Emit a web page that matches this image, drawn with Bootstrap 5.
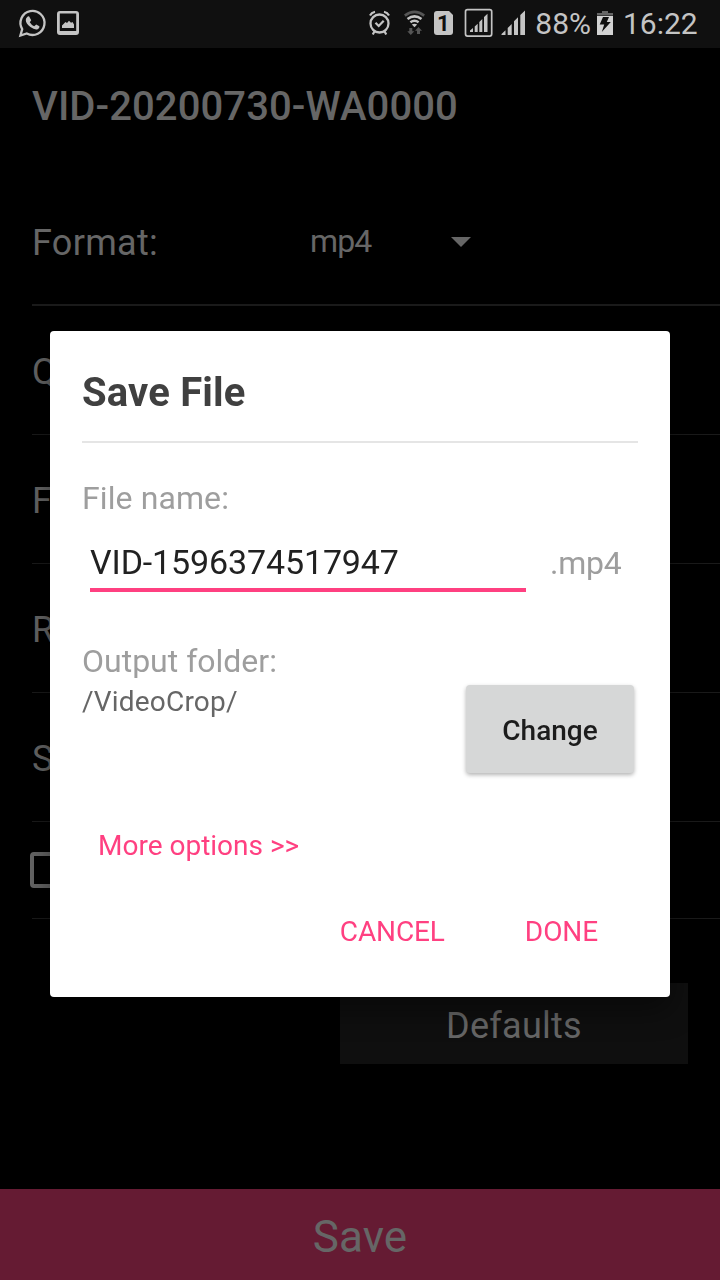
<!DOCTYPE html>
<html lang="en">
<head>
<meta charset="utf-8">
<meta name="viewport" content="width=device-width, initial-scale=1">
<title>Save File</title>
<link href="https://cdn.jsdelivr.net/npm/bootstrap@5.3.0/dist/css/bootstrap.min.css" rel="stylesheet">
<style>
  :root { --pink: #ff4081; --dim: #666; --rule: #1a1a1a; }
  body { font-family: Roboto, sans-serif; background: #000; color: var(--dim); height: 1280px; overflow: hidden; line-height: 1.2; }
  .status-bar { height: 48px; background: #101010; color: #c4c4c4; font-size: 30px; line-height: 47px; }
  .status-bar svg { height: 48px; display: block; flex: none; }
  .page-title { height: 117px; margin-bottom: 13px; font-size: 40px; font-weight: 500; letter-spacing: .09px; padding-left: 32px; }
  .setting { height: 129px; margin-left: 32px; padding-top: 6px; font-size: 36px; border-bottom: 1px solid var(--rule); }
  .setting-first { height: 128px; border-bottom-width: 2px; padding-top: 5px; }
  .setting-label { width: 278px; letter-spacing: .3px; }
  .setting-value { font-size: 32px; width: 141px; letter-spacing: -.9px; margin-bottom: 5px; }
  .setting-check { height: 97px; padding: 0; }
  .tick-box { width: 36px; height: 36px; border: 4px solid var(--dim); border-radius: 4px; margin-left: -2px; }
  .defaults-btn { width: 348px; height: 81px; margin: 64px 32px 0 auto; background: #0f0f0f; font-size: 36px; padding-top: 7px; letter-spacing: .25px; }
  .save-btn { height: 91px; background: #651b33; font-size: 44px; padding-top: 6px; letter-spacing: .1px; }
  .overlay { top: 48px; }
  .dialog { width: 620px; height: 666px; border-radius: 4px; padding: 0 32px; background: #fff; box-shadow: 0 12px 30px rgba(0,0,0,.45); }
  .dialog-title { height: 112px; padding-top: 13px; font-size: 40px; font-weight: 700; letter-spacing: .18px; color: #404040; border-bottom: 2px solid #e5e5e5; }
  .field-label { font-size: 32px; line-height: 40px; color: #9e9e9e; }
  .name-label { margin-top: 35px; letter-spacing: .1px; }
  .file-row { margin: 18px 0 0 8px; }
  .file-input { width: 436px; height: 56px; font-size: 34px; line-height: 40px; padding: 6px 0 0; letter-spacing: -.13px; color: #212121; border-bottom: 4px solid var(--pink); }
  .file-ext { font-size: 32px; line-height: 40px; padding: 7px 0 0 24px; letter-spacing: -.2px; color: #9e9e9e; }
  .folder { margin-top: 49px; }
  .folder-path { font-size: 28px; line-height: 40px; padding-top: 1px; letter-spacing: .2px; color: #666; }
  .change-btn { width: 168px; height: 88px; margin: 44px 4px 0 0; border-radius: 4px; background: #d6d7d7; color: #1c1c1c; font-size: 28px; font-weight: 500; padding-top: 3px; box-shadow: 0 2px 4px rgba(0,0,0,.3); }
  .link-text { font-size: 28px; line-height: 40px; color: var(--pink); }
  .more { margin: 53px 0 0 16px; }
  .actions { margin-top: 46px; padding-right: 40px; gap: 80px; letter-spacing: -.1px; }
</style>
</head>
<body class="d-flex flex-column">
  <header class="status-bar d-flex flex-shrink-0">
    <svg style="width:82px" viewBox="0 0 82 48" fill="none" stroke="#c4c4c4">
      <path d="M20.400 35.600l1.800-6.500a12 12 0 1 1 4.600 4.400z" stroke-width="2.300"/>
      <path d="M27 17.200q1-1.200 2.200-.8l2 3.800-1.400 2q1.600 2.800 4.400 4l2-1.600 3.200 1.700q.4 2.200-1.700 3-3 1-7.300-2.200-4.700-3.800-4.600-7.200 0-1.700 1.200-2.700z" fill="#c4c4c4" stroke="none"/>
      <path d="M60 11h16a3 3 0 0 1 3 3v18a3 3 0 0 1-3 3H60a3 3 0 0 1-3-3V14a3 3 0 0 1 3-3zM59.800 13.500v17.500h16.400V13.500z" fill="#c4c4c4" fill-rule="evenodd" stroke="none"/>
      <path d="M62 28v-2.500l3.500-3.500 1.500 1 2-2.200 2 2 1.500-.8 1.500 2.500v3.500z" fill="#c4c4c4" stroke="none"/>
    </svg>
    <svg class="ms-auto" style="width:168px" viewBox="363 0 168 48" fill="none" stroke="#c4c4c4">
      <circle cx="379.500" cy="23.500" r="9" stroke-width="2.300"/>
      <path d="M375.500 22.800l3.200 3.200 5-5.300" stroke-width="2.200"/>
      <path d="M370 15.500q1.500-3 5-3.800M389 15.500q-1.500-3-5-3.800M374.500 31.200l-1.700 3.400M384.500 31.200l1.700 3.400" stroke-width="2.200"/>
      <path d="M404.800 15.600q9.700-7.400 19.400 0" stroke="#555" stroke-width="2.600"/>
      <path d="M407.500 19q7-5.300 14 0M410.400 22.300q4.100-3 8.200 0" stroke-width="2.500"/>
      <path d="M411.800 24.500q2.700-1.700 5.400 0l-2.700 2.700z" fill="#c4c4c4" stroke="none"/>
      <path d="M409.300 28h3v3.300h2l-3.500 3.700-3.500-3.700h2zM417 34h3v-3.300h2l-3.500-3.700-3.500 3.700h2z" fill="#555" stroke="none"/>
      <path d="M437 11h12l4 4v17a3 3 0 0 1-3 3h-13a3 3 0 0 1-3-3V14a3 3 0 0 1 3-3z" fill="#c4c4c4" stroke="none"/>
      <text x="443.300" y="31" text-anchor="middle" font-size="22" font-weight="700" fill="#101010" stroke="none">1</text>
      <rect x="465.500" y="9.700" width="26.200" height="26.400" rx="2" stroke-width="1.700"/>
      <path d="M470 32v-1.500l3-2.500v4zM474.700 32v-5.500l3-2.700V32zM479.300 32v-10l3-3V32zM484 32V17l3.500-3.300V32z" fill="#c4c4c4" stroke="none"/>
      <path d="M501.500 35v-1l4-3.700V35zM507.700 35v-7l4-4v11zM514 35V21.300l4-4V35zM520.300 35V15l4.700-4.500V35z" fill="#c4c4c4" stroke="none"/>
    </svg>
    <span class="ms-1">88%</span>
    <svg style="width:32px" viewBox="591 0 32 48">
      <path d="M597 13h5v-2h6v2h5v2.500h-16z" fill="#666"/>
      <path d="M597 16h16v19h-16z" fill="#d2d2d2"/>
      <path d="M603 17h6l-2.200 5h4l-9 10 2.400-7.500h-4.500z" fill="#101010"/>
    </svg>
    <span style="width:97px">16:22</span>
  </header>

  <h1 class="page-title d-flex align-items-center flex-shrink-0">VID-20200730-WA0000</h1>

  <main class="flex-grow-1">
    <div class="setting setting-first d-flex align-items-center">
      <span class="setting-label">Format:</span>
      <span class="setting-value">mp4</span>
      <svg class="mb-1" width="20" height="10" viewBox="0 0 20 10"><path d="M0 0h20L10 10z" fill="#666"/></svg>
    </div>
    <div class="setting d-flex align-items-center">Q</div>
    <div class="setting d-flex align-items-center">F</div>
    <div class="setting d-flex align-items-center">R</div>
    <div class="setting d-flex align-items-center">S</div>
    <div class="setting setting-check d-flex align-items-center"><span class="tick-box"></span></div>
    <div class="defaults-btn d-flex align-items-center justify-content-center">Defaults</div>
  </main>

  <footer class="save-btn d-flex align-items-center justify-content-center flex-shrink-0">Save</footer>

  <div class="overlay position-fixed start-0 end-0 bottom-0 d-flex align-items-center justify-content-center">
    <section class="dialog" role="dialog">
      <h2 class="dialog-title d-flex align-items-center mb-0">Save File</h2>
      <div class="field-label name-label">File name:</div>
      <div class="file-row d-flex">
        <div class="file-input">VID-1596374517947</div>
        <div class="file-ext">.mp4</div>
      </div>
      <div class="folder d-flex justify-content-between">
        <div>
          <div class="field-label">Output folder:</div>
          <div class="folder-path">/VideoCrop/</div>
        </div>
        <div class="change-btn d-flex align-items-center justify-content-center">Change</div>
      </div>
      <div class="more link-text">More options &gt;&gt;</div>
      <div class="actions link-text d-flex justify-content-end"><span>CANCEL</span><span>DONE</span></div>
    </section>
  </div>
<script src="https://cdn.jsdelivr.net/npm/bootstrap@5.3.0/dist/js/bootstrap.bundle.min.js"></script>
</body>
</html>
